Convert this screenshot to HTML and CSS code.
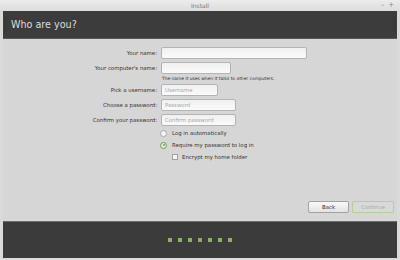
FILE: index.html
```html
<!DOCTYPE html>
<html lang="en">
<head>
    <meta charset="UTF-8">
    <title>Install</title>
    <link rel="stylesheet" href="styles.css">
</head>
<body>
    <div class="window">
        <div class="titlebar">
            <span class="title">Install</span>
            <span class="controls"><span>&ndash;</span><span>+</span></span>
        </div>
        <div class="header">Who are you?</div>
        <div class="content">
            <form class="form">
                <div class="row">
                    <label>Your name:</label>
                    <input type="text" class="wide" value="">
                </div>
                <div class="row">
                    <label>Your computer's name:</label>
                    <input type="text" class="medium">
                </div>
                <div class="hint">The name it uses when it talks to other computers.</div>
                <div class="row">
                    <label>Pick a username:</label>
                    <input type="text" class="short" placeholder="Username">
                </div>
                <div class="row">
                    <label>Choose a password:</label>
                    <input type="text" class="pass" placeholder="Password">
                </div>
                <div class="row">
                    <label>Confirm your password:</label>
                    <input type="text" class="pass" placeholder="Confirm password">
                </div>
                <div class="option">
                    <span class="radio"></span>Log in automatically
                </div>
                <div class="option">
                    <span class="radio checked"></span>Require my password to log in
                </div>
                <div class="option sub">
                    <span class="check"></span>Encrypt my home folder
                </div>
            </form>
            <div class="buttons">
                <button type="button" class="btn">Back</button>
                <button type="button" class="btn continue">Continue</button>
            </div>
        </div>
        <div class="footer">
            <span class="dot"></span><span class="dot"></span><span class="dot"></span><span class="dot"></span><span class="dot"></span><span class="dot"></span><span class="dot"></span>
        </div>
    </div>
</body>
</html>
```

FILE: styles.css
```css
body {
    margin: 0;
    font-family: 'DejaVu Sans', sans-serif;
    background-color: #d9d9d9;
}
.window {
    width: 400px;
    height: 260px;
    box-sizing: border-box;
    padding: 0 3px 2px 3px;
    display: flex;
    flex-direction: column;
    background: #dadada;
}
.titlebar {
    height: 11px;
    display: flex;
    align-items: center;
    justify-content: center;
    position: relative;
    background: linear-gradient(#ececec, #dcdcdc);
    margin: 0 -3px;
}
.title {
    font-size: 6px;
    color: #777;
}
.controls {
    position: absolute;
    right: 6px;
    top: 1px;
    display: flex;
    gap: 4px;
    font-size: 7px;
    color: #888;
}
.header {
    height: 27px;
    background-color: #3c3c3c;
    color: #dcdcdc;
    font-size: 9.6px;
    padding-left: 8px;
    display: flex;
    align-items: center;
    border-bottom: 1px solid #5a5a5a;
}
.content {
    flex: 1;
    background-color: #d6d6d6;
    display: flex;
    flex-direction: column;
    padding-top: 8px;
}
.form {
    display: flex;
    flex-direction: column;
    font-size: 5.4px;
    color: #333;
}
.row {
    display: flex;
    align-items: center;
    height: 12px;
    margin-bottom: 3px;
}
.row label {
    width: 158px;
    text-align: right;
    padding-right: 4px;
    box-sizing: border-box;
}
.row input {
    height: 12px;
    box-sizing: border-box;
    border: 1px solid #b4b4b4;
    border-radius: 2px;
    background: linear-gradient(#f0f0f0, #fafafa);
    font-family: inherit;
    font-size: 5.4px;
    padding: 0 3px;
    margin: 0;
    outline: none;
}
.row input::placeholder {
    color: #a8a8a8;
}
.wide { width: 146px; }
.medium { width: 70px; }
.short { width: 57px; }
.pass { width: 75px; }
.hint {
    font-size: 4.4px;
    color: #333;
    padding-left: 159px;
    margin-top: -1px;
    margin-bottom: 2px;
    height: 6px;
}
.option {
    display: flex;
    align-items: center;
    height: 12px;
    padding-left: 157px;
    color: #333;
}
.form .row + .option {
    margin-top: -2px;
}
.option.sub {
    padding-left: 169px;
}
.radio {
    width: 5px;
    height: 5px;
    border-radius: 50%;
    border: 1px solid #a8a8a8;
    background: #f4f4f4;
    margin-right: 5px;
    position: relative;
}
.radio.checked {
    border-color: #6f9a4a;
    background: #e8e8e8;
}
.radio.checked::after {
    content: "";
    position: absolute;
    left: 1.5px;
    top: 1.5px;
    width: 2px;
    height: 2px;
    border-radius: 50%;
    background: #6f9a4a;
}
.check {
    width: 4px;
    height: 4px;
    border: 1px solid #a0a0a0;
    background: #f4f4f4;
    margin-right: 4px;
}
.buttons {
    margin-top: auto;
    margin-bottom: 8px;
    display: flex;
    justify-content: flex-end;
    gap: 3px;
    padding-right: 3px;
}
.btn {
    width: 41px;
    height: 12px;
    padding: 0;
    font-family: inherit;
    font-size: 5.4px;
    color: #333;
    border: 1px solid #a2a2a2;
    border-radius: 2px;
    background: linear-gradient(#fafafa, #e2e2e2);
}
.btn.continue {
    width: 42px;
    color: #a9a9a9;
    border-color: #b3cf96;
    background: #d9d9d9;
}
.footer {
    height: 36px;
    background-color: #3b3b3b;
    border-top: 1px solid #6a6a6a;
    display: flex;
    align-items: center;
    justify-content: center;
    gap: 6px;
}
.dot {
    width: 4px;
    height: 4px;
    background-color: #8cb069;
}
```
